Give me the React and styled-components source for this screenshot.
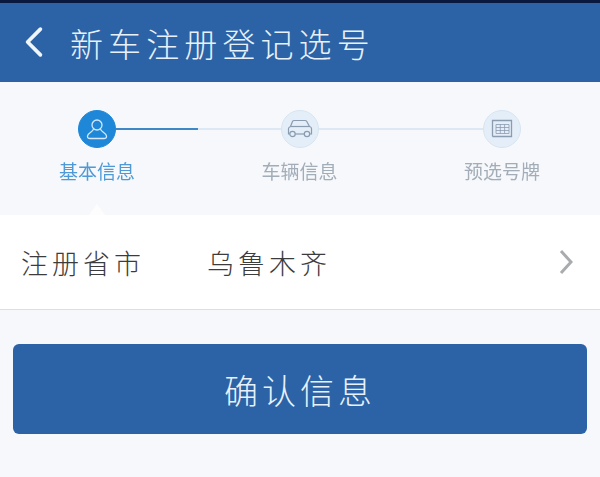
import React from "react";
import styled, { createGlobalStyle } from "styled-components";

const GlobalStyle = createGlobalStyle`
  html, body {
    margin: 0;
    padding: 0;
    background: #f6f8fb;
    font-family: "Noto Sans CJK SC", "Liberation Sans", sans-serif;
  }
`;

const App = () => {
  return (
    <>
      <GlobalStyle />
      <Page>
        <StatusStrip />
        <Header>
          <BackIcon viewBox="0 0 24 34">
            <path d="M19 3 L5 17 L19 31" />
          </BackIcon>
          <Title>新车注册登记选号</Title>
        </Header>

        <Steps>
          <Track>
            <Circle $active>
              <svg width="24" height="24" viewBox="0 0 24 24" fill="none" stroke="#d5e9fa" strokeWidth="1.3">
                <circle cx="12" cy="8" r="5" />
                <path d="M8.5 12 C8 15 3 15.5 2.5 19 C2.3 21 3.5 21.5 5 21.5 H19 C20.5 21.5 21.7 21 21.5 19 C21 15.5 16 15 15.5 12" />
              </svg>
            </Circle>
            <Line><Progress /></Line>
            <Circle>
              <svg width="26" height="20" viewBox="0 0 26 20" fill="none" stroke="#8b9bb0" strokeWidth="1.2">
                <path d="M2.800 15 H1.500 V9.500 C1.500 8.500 2.500 8 3.500 7.500 L5.500 2.500 C5.800 1.700 6.500 1.500 7.200 1.500 H18 C18.800 1.500 19.400 1.800 19.800 2.500 L22.500 7.500 C24 8 24.500 8.700 24.500 9.500 V15 H22.700" />
                <path d="M3.500 7.500 H22.500" />
                <path d="M8.200 15 H17.300" />
                <circle cx="5.500" cy="15" r="2.700" />
                <circle cx="20" cy="15" r="2.700" />
              </svg>
            </Circle>
            <Line />
            <Circle>
              <svg width="22" height="20" viewBox="0 0 22 20" fill="none" stroke="#8b9bb0" strokeWidth="1.3">
                <path d="M1.500 17.500 V1.500 H20.500 V17.500 H1.500" />
                <path d="M5 5.500 H18 M5 8.500 H18 M5 11.500 H18 M5 14.500 H18 M5 5.500 V14.500 M9.300 5.500 V14.500 M13.600 5.500 V14.500 M18 5.500 V14.500" strokeWidth="0.8" />
              </svg>
            </Circle>
          </Track>
          <Labels>
            <StepLabel $active>基本信息</StepLabel>
            <StepLabel>车辆信息</StepLabel>
            <StepLabel>预选号牌</StepLabel>
          </Labels>
          <Caret />
        </Steps>

        <Row>
          <RowLabel>注册省市</RowLabel>
          <RowValue>乌鲁木齐</RowValue>
          <Chevron viewBox="0 0 14 26">
            <path d="M2 2 L12 13 L2 24" />
          </Chevron>
        </Row>

        <ButtonWrap>
          <Confirm>确认信息</Confirm>
        </ButtonWrap>
      </Page>
    </>
  );
};

const Page = styled.div`
  width: 600px;
  height: 477px;
  overflow: hidden;
  background: #f6f8fb;
`;

const StatusStrip = styled.div`
  height: 3px;
  background: #08183f;
`;

const Header = styled.div`
  height: 79px;
  box-sizing: border-box;
  padding-left: 23px;
  display: flex;
  align-items: center;
  background: #2b63a6;
`;

const BackIcon = styled.svg`
  width: 22px;
  height: 34px;
  margin-top: -2px;
  fill: none;
  stroke: #eef5fb;
  stroke-width: 4;
  stroke-linecap: round;
  stroke-linejoin: round;
`;

const Title = styled.div`
  margin-left: 25px;
  font-size: 33px;
  font-weight: 300;
  letter-spacing: 5.100px;
  line-height: 40px;
  color: #e8f1f9;
  white-space: nowrap;
`;

const Steps = styled.div`
  position: relative;
  height: 133px;
  box-sizing: border-box;
  padding-top: 28px;
  background: #f6f8fb;
`;

const Track = styled.div`
  display: flex;
  align-items: center;
  padding-left: 78px;
`;

const Circle = styled.div`
  flex: none;
  width: 38px;
  height: 38px;
  box-sizing: border-box;
  border-radius: 50%;
  display: flex;
  align-items: center;
  justify-content: center;
  filter: blur(0.3px);
  background: ${(props) => (props.$active ? "#1f87d8" : "#e3eef8")};
  border: 1px solid ${(props) => (props.$active ? "#1f87d8" : "#d6e4f1")};
`;

const Line = styled.div`
  flex: none;
  width: 164.500px;
  height: 2px;
  background: #dce9f5;
`;

const Progress = styled.div`
  width: 82px;
  height: 2px;
  background: #3f88c8;
`;

const Labels = styled.div`
  display: flex;
  gap: 126.500px;
  margin-top: 10px;
  padding-left: 59px;
  filter: blur(0.4px);
`;

const StepLabel = styled.div`
  width: 76px;
  font-size: 19px;
  line-height: 26px;
  white-space: nowrap;
  color: ${(props) => (props.$active ? "#4f9ad6" : "#a3adb8")};
`;

const Caret = styled.div`
  position: absolute;
  left: 89px;
  bottom: 0;
  width: 0;
  height: 0;
  border-left: 8px solid transparent;
  border-right: 8px solid transparent;
  border-bottom: 11px solid #fdfdfe;
`;

const Row = styled.div`
  height: 95px;
  box-sizing: border-box;
  padding: 0 27px 0 21px;
  display: flex;
  align-items: center;
  background: #ffffff;
  border-bottom: 1px solid #dcdee0;
`;

const RowLabel = styled.div`
  width: 186px;
  font-size: 27px;
  font-weight: 300;
  letter-spacing: 4px;
  color: #3c3c3c;
  white-space: nowrap;
`;

const RowValue = styled(RowLabel)`
  flex: 1;
  width: auto;
`;

const Chevron = styled.svg`
  width: 14px;
  height: 26px;
  fill: none;
  stroke: #a9acaf;
  stroke-width: 3;
`;

const ButtonWrap = styled.div`
  padding: 34px 13px 0;
`;

const Confirm = styled.div`
  height: 90px;
  border-radius: 6px;
  display: flex;
  align-items: center;
  justify-content: center;
  background: #2b63a6;
  color: #e8f1f9;
  font-size: 34px;
  font-weight: 300;
  letter-spacing: 4px;
`;

export default App;
